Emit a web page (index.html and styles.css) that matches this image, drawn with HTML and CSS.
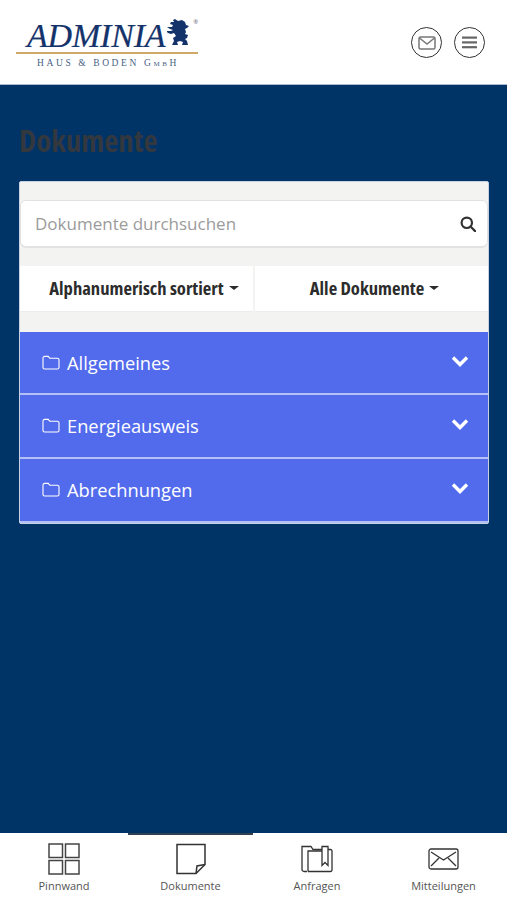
FILE: index.html
```html
<!DOCTYPE html>
<html lang="de">
<head>
  <meta charset="UTF-8">
  <meta name="viewport" content="width=device-width, initial-scale=1.0">
  <title>Dokumente</title>
  <link rel="stylesheet" href="styles.css">
</head>
<body>
  <div class="app">
    <header class="top">
      <div class="logo">
        <div class="logo-main">
          <span class="logo-name">ADMINIA</span>
          <svg class="lion" width="24" height="30" viewBox="0 0 24 30">
            <path fill="#14336b" d="M8 0l3 2 4-1 3 2 1 3 3 1-2 2-2 1 1 3-1 2 3 1-1 3-2 1 2 2 1 4h-6l1-3-3-1-3 1 1 3H5l2-4-1-3 3-2-2-3-3 1-3-1-2-2 5 0 2-1-3-1-3-2 5 0 1-2-3-1 1-2 3 0-1-2z"/>
          </svg>
          <span class="logo-reg">®</span>
        </div>
        <div class="logo-line"></div>
        <div class="logo-sub">HAUS &amp; BODEN G<small>MB</small>H</div>
      </div>
      <div class="top-btns">
        <button class="round">
          <svg width="18" height="14" viewBox="0 0 18 14" fill="none" stroke="#777" stroke-width="1.500">
            <rect x="1" y="1" width="16" height="12" rx="1.500"/>
            <path d="M1.500 2l7.500 6 7.500-6"/>
          </svg>
        </button>
        <button class="round">
          <svg width="15" height="13" viewBox="0 0 15 13" fill="#666">
            <rect width="15" height="2.200" y="0.500"/>
            <rect width="15" height="2.200" y="5.300"/>
            <rect width="15" height="2.200" y="10.100"/>
          </svg>
        </button>
      </div>
    </header>

    <main class="content">
      <h1 class="title">Dokumente</h1>
      <section class="panel">
        <div class="search">
          <span class="search-text">Dokumente durchsuchen</span>
          <svg width="16" height="16" viewBox="0 0 16 16" fill="none" stroke="#333" stroke-width="2.200">
            <circle cx="6.800" cy="6.800" r="5.200"/>
            <path d="M10.500 10.500l4.600 4.600" stroke-linecap="round"/>
          </svg>
        </div>
        <div class="filters">
          <button class="filter filter-sort"><span>Alphanumerisch sortiert</span><i class="caret"></i></button>
          <button class="filter filter-type"><span>Alle Dokumente</span><i class="caret"></i></button>
        </div>
        <div class="folders">
          <div class="folder">
            <svg class="folder-icon" width="18" height="15" viewBox="0 0 18 15" fill="none" stroke="#fff" stroke-width="1.100">
              <path d="M1 3a1.600 1.600 0 0 1 1.600-1.600h3.600l1.600 1.800h7.600A1.600 1.600 0 0 1 17 4.800v7.600A1.600 1.600 0 0 1 15.400 14H2.600A1.600 1.600 0 0 1 1 12.400z"/>
            </svg>
            <span class="folder-name">Allgemeines</span>
            <svg class="chev" width="18" height="12" viewBox="0 0 18 12" fill="none" stroke="#fff" stroke-width="3.400">
              <path d="M2 2.500l7 7 7-7"/>
            </svg>
          </div>
          <div class="folder">
            <svg class="folder-icon" width="18" height="15" viewBox="0 0 18 15" fill="none" stroke="#fff" stroke-width="1.100">
              <path d="M1 3a1.600 1.600 0 0 1 1.600-1.600h3.600l1.600 1.800h7.600A1.600 1.600 0 0 1 17 4.800v7.600A1.600 1.600 0 0 1 15.400 14H2.600A1.600 1.600 0 0 1 1 12.400z"/>
            </svg>
            <span class="folder-name">Energieausweis</span>
            <svg class="chev" width="18" height="12" viewBox="0 0 18 12" fill="none" stroke="#fff" stroke-width="3.400">
              <path d="M2 2.500l7 7 7-7"/>
            </svg>
          </div>
          <div class="folder">
            <svg class="folder-icon" width="18" height="15" viewBox="0 0 18 15" fill="none" stroke="#fff" stroke-width="1.100">
              <path d="M1 3a1.600 1.600 0 0 1 1.600-1.600h3.600l1.600 1.800h7.600A1.600 1.600 0 0 1 17 4.800v7.600A1.600 1.600 0 0 1 15.400 14H2.600A1.600 1.600 0 0 1 1 12.400z"/>
            </svg>
            <span class="folder-name">Abrechnungen</span>
            <svg class="chev" width="18" height="12" viewBox="0 0 18 12" fill="none" stroke="#fff" stroke-width="3.400">
              <path d="M2 2.500l7 7 7-7"/>
            </svg>
          </div>
        </div>
      </section>
    </main>

    <nav class="tabs">
      <a class="tab">
        <svg width="32" height="32" viewBox="0 0 32 32" fill="none" stroke="#444" stroke-width="1.500">
          <rect x="1" y="1" width="13.500" height="13.500"/>
          <rect x="17.500" y="1" width="13.500" height="13.500"/>
          <rect x="1" y="17.500" width="13.500" height="13.500"/>
          <rect x="17.500" y="17.500" width="13.500" height="13.500"/>
        </svg>
        <span>Pinnwand</span>
      </a>
      <a class="tab active">
        <svg width="32" height="32" viewBox="0 0 32 32" fill="none" stroke="#333" stroke-width="1.500">
          <path d="M2 1.500h28v20l-9 9H2z"/>
          <path d="M30 21.500l-8 1.500-1 7.500"/>
        </svg>
        <span>Dokumente</span>
      </a>
      <a class="tab">
        <svg width="32" height="28" viewBox="0 0 32 28" fill="none" stroke="#333" stroke-width="1.300">
          <path d="M6 26.500H3a2 2 0 0 1-2-2V1.500h9l2 3h9"/>
          <path d="M7 26.500V6h14"/>
          <path d="M21 1.500h6v19l-3-3-3 3z"/>
          <path d="M27 4.500h2.500a1.500 1.500 0 0 1 1.500 1.500v19a1.500 1.500 0 0 1-1.500 1.500H7"/>
        </svg>
        <span>Anfragen</span>
      </a>
      <a class="tab">
        <svg width="31" height="22" viewBox="0 0 31 22" fill="none" stroke="#333" stroke-width="1.300">
          <rect x="1" y="1" width="29" height="20" rx="2"/>
          <path d="M3 4l12.500 8L28 4"/>
          <path d="M3 18l8-8M28 18l-8-8"/>
        </svg>
        <span>Mitteilungen</span>
      </a>
    </nav>
  </div>
</body>
</html>
```

FILE: styles.css
```css
*{
  box-sizing: border-box;
}
body{
  margin: 0;
  font-family: "Open Sans", "Noto Sans", sans-serif;
  background-color: #003366;
}
.app{
  height: 900px;
  display: flex;
  flex-direction: column;
}
/* header */
.top{
  height: 85px;
  flex: none;
  background-color: #fff;
  border-bottom: 1px solid #a9b9cf;
  display: flex;
  justify-content: space-between;
  align-items: center;
  padding: 0 22px 0 16px;
}
.logo{
  width: 182px;
  margin-bottom: 0;
}
.logo-main{
  display: flex;
  align-items: flex-end;
  height: 33px;
  padding-left: 11px;
}
.logo-name{
  font-family: "Liberation Serif", serif;
  font-style: italic;
  font-size: 34px;
  line-height: 28px;
  color: #14336b;
  letter-spacing: -0.200px;
  -webkit-text-stroke: 0.200px #14336b;
}
.lion{
  margin: 0 0 1px 2px;
  flex: none;
}
.logo-reg{
  font-size: 6px;
  color: #667;
  align-self: flex-start;
  margin: 1px 0 0 2px;
}
.logo-line{
  height: 2px;
  margin-top: 2px;
  background-color: #d0a868;
}
.logo-sub{
  font-family: "Liberation Serif", serif;
  font-size: 9.500px;
  letter-spacing: 2.600px;
  color: #4a5f85;
  margin: 4px 0 0 21px;
  white-space: nowrap;
}
.logo-sub small{
  font-size: 7px;
}
.top-btns{
  display: flex;
  gap: 12px;
  padding-top: 1px;
}
.round{
  width: 31px;
  height: 31px;
  padding: 0;
  border: 1.500px solid #333;
  border-radius: 50%;
  background-color: #fff;
  display: flex;
  align-items: center;
  justify-content: center;
}
/* content */
.content{
  flex: 1 1 auto;
  padding: 0 18px 0 19px;
}
.title{
  margin: 36px 0 22px;
  height: 38px;
  line-height: 38px;
  font-size: 30.800px;
  font-weight: 700;
  font-stretch: 75%;
  color: #33383f;
}
.panel{
  background-color: #f3f3f2;
  border: 1px solid #c5d2e4;
  border-radius: 2px;
  padding-top: 18px;
}
.search{
  height: 48px;
  background-color: #fff;
  border: 1px solid #e2e2e2;
  border-bottom-width: 2px;
  border-radius: 6px;
  display: flex;
  align-items: center;
  justify-content: space-between;
  padding: 0 11px 0 14px;
}
.search-text{
  font-size: 17px;
  color: #9b9b9b;
}
.filters{
  margin-top: 18px;
  display: grid;
  grid-template-columns: 1fr 1fr;
  gap: 2px;
}
.filter{
  height: 46px;
  padding: 0 0 2px;
  background-color: #fff;
  border: none;
  border-bottom: 1px solid #ececec;
  display: flex;
  align-items: center;
  justify-content: center;
  font-family: "Open Sans", sans-serif;
  font-size: 18.600px;
  font-weight: 700;
  font-stretch: 75%;
  color: #2c2c2c;
  white-space: nowrap;
}
.filter-sort{
  padding-left: 15px;
}
.filter-type{
  padding-left: 6px;
}
.caret{
  margin-left: 5px;
  border-top: 4px solid #2c2c2c;
  border-left: 5px solid transparent;
  border-right: 5px solid transparent;
}
.folders{
  margin-top: 20px;
  display: flex;
  flex-direction: column;
}
.folder{
  height: 64px;
  background-color: #526bec;
  border-bottom: 2px solid #b4c0f3;
  display: flex;
  align-items: center;
  padding: 0 19px 1px 22px;
  color: #fff;
}
.folder:first-child{
  height: 63px;
  padding-bottom: 0;
}
.folder-name{
  flex: 1 1 auto;
  margin-left: 7px;
  font-size: 18.300px;
}
.chev{
  margin-bottom: 4px;
}
/* bottom tabs */
.tabs{
  height: 67px;
  flex: none;
  background-color: #fff;
  display: grid;
  grid-template-columns: 128px 125px 128px 125px;
}
.tab{
  display: flex;
  flex-direction: column;
  align-items: center;
  height: 67px;
  padding-top: 8px;
  border-top: 2px solid transparent;
  font-size: 11px;
  color: #555;
}
.tab svg{
  height: 32px;
}
.tab span{
  margin-top: 3px;
}
.tab.active{
  border-top-color: #33404f;
}
```
